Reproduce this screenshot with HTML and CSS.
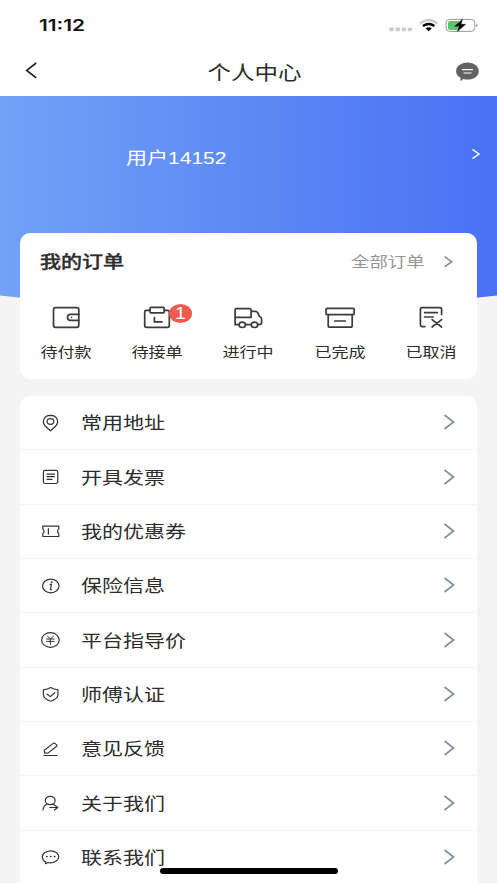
FILE: index.html
```html
<!DOCTYPE html>
<html lang="zh-CN">
<head>
<meta charset="utf-8">
<title>个人中心</title>
<link rel="stylesheet" href="styles.css">
</head>
<body>
<div class="screen">
  <div class="status">
    <span class="time">11:12</span>
    <svg class="indicators" width="90" height="18" viewBox="388 16 90 18">
      <g fill="#cbcbcd"><rect x="389.3" y="27.5" width="4.5" height="3.7" rx="1.2"/><rect x="395.4" y="27.5" width="4.5" height="3.7" rx="1.2"/><rect x="401.6" y="27.5" width="4.5" height="3.7" rx="1.2"/><rect x="407.7" y="27.5" width="4.5" height="3.7" rx="1.2"/></g>
      <path d="M419.8 23.4Q428.7 16.8 437.6 23.4" fill="none" stroke="#c9c9cb" stroke-width="2.4"/>
      <path d="M423 26Q428.7 22 434.4 26" fill="none" stroke="#000" stroke-width="2.5"/>
      <path d="M425.5 28.3Q428.7 26.4 431.9 28.3L428.7 31.2Z" fill="#000"/>
      <rect x="446" y="19.4" width="28.8" height="12" rx="3.6" fill="#fff" stroke="#9b9b9b" stroke-width="1"/>
      <path d="M450 21H459L457.5 30H450Q448 30 448 28V23Q448 21 450 21Z" fill="#5fc466"/>
      <path d="M476.3 23.5Q478.6 25.3 476.3 27.3Z" fill="#8b8b8b"/>
      <path d="M462.5 19.2L454.6 26.3H459L457.4 31.6L465.6 24.3H461Z" fill="#000" stroke="#000" stroke-width=".4"/>
    </svg>
  </div>
  <header class="nav">
    <svg width="14" height="18" viewBox="24 61 14 18"><path d="M36.2 63L26.7 70.4L36.2 77.8" fill="none" stroke="#222" stroke-width="1.7"/></svg>
    <h1 class="title"><span class="wide">个人中心</span></h1>
    <svg width="24" height="20" viewBox="455 62 24 20"><path d="M467.5 62.6C474 62.6 478.8 66.4 478.8 71.2C478.8 76.2 474 79.6 467.5 79.6C466 79.6 464.6 79.5 463.3 79.1L460.4 81.2V77.6C457.6 76.1 456.1 73.8 456.1 71.2C456.1 66.4 461 62.6 467.5 62.6Z" fill="#626262"/><path d="M462 69.6H473M463.5 73H471.5" stroke="#fff" stroke-width="1.1"/></svg>
  </header>
  <section class="hero">
    <span class="user wide">用户14152</span>
    <svg width="10" height="12" viewBox="471 148 10 12"><path d="M472.5 149.4L479 154L472.5 158.6" fill="none" stroke="#fff" stroke-width="1.4"/></svg>
  </section>
  <main class="content">
    <section class="orders">
      <div class="orders-head">
        <h2><span class="wide">我的订单</span></h2>
        <span class="all"><span class="wide">全部订单</span></span>
        <svg width="10" height="14" viewBox="443 255 10 14"><path d="M444.5 256.6L451.7 261.7L444.5 266.8" fill="none" stroke="#888" stroke-width="1.5"/></svg>
      </div>
      <div class="tabs">
        <div class="tab">
          <svg width="36" height="28" viewBox="48 304 36 28"><rect x="53.5" y="307.7" width="25.3" height="19.6" rx="2"/><path d="M78.8 314.4H70.5Q67.5 314.4 67.5 317.4Q67.5 320.3 70.5 320.3H78.8"/><circle cx="71.6" cy="317.4" r=".8" class="dot"/></svg>
          <span class="wide">待付款</span>
        </div>
        <div class="tab">
          <svg width="36" height="28" viewBox="139 304 36 28"><path d="M149.8 310.3H146.4Q144.7 310.3 144.7 312V325.4Q144.7 327.3 146.6 327.3H167.5Q169.3 327.3 169.3 325.4V312Q169.3 310.3 167.6 310.3H164.4M154.4 317.5V321.9H162"/><rect x="150" y="307.4" width="14.2" height="5.4" rx="1"/></svg>
          <span class="wide">待接单</span>
          <span class="badge"><span class="wide">1</span></span>
        </div>
        <div class="tab">
          <svg width="36" height="28" viewBox="230.7 304 36 28"><path d="M239.6 324.6H235.8V309.8Q235.8 308.7 237 308.7H250.6Q251.8 308.7 251.8 309.8V317.3H235.8M251.8 311.4H256Q257.6 311.4 258.6 313L260 316.2Q262.3 317 262.3 319V323Q262.3 324.6 259.3 324.6M246.3 324.6H251.5"/><ellipse cx="243" cy="324.8" rx="3.2" ry="2.7"/><ellipse cx="255.2" cy="324.8" rx="3.2" ry="2.7"/></svg>
          <span class="wide">进行中</span>
        </div>
        <div class="tab">
          <svg width="36" height="28" viewBox="322 304 36 28"><rect x="326" y="308.4" width="28.2" height="6.2" rx="1.2"/><path d="M328.2 314.6V325.4Q328.2 327.2 330 327.2H350.4Q352.2 327.2 352.2 325.4V314.6M334.8 321H345.3"/></svg>
          <span class="wide">已完成</span>
        </div>
        <div class="tab">
          <svg width="36" height="28" viewBox="413.4 304 36 28"><path d="M425.3 326.6H422.4Q420.8 326.6 420.8 325V309Q420.8 307.7 422.4 307.7H440.4Q442 307.7 442 309V314.5M425 312.6H437.8M425 317H433.5M432.5 319.6L442 327M442 319.6L432.5 327"/></svg>
          <span class="wide">已取消</span>
        </div>
      </div>
    </section>
    <ul class="menu">
      <li class="row"><svg class="icon" viewBox="40 412 22 22"><path d="M50.5 430.8L45.7 426.5C41.9 423 42.6 415.5 50.5 415.3C58.4 415.5 59.1 423 55.3 426.5Z"/><ellipse cx="50.5" cy="421.5" rx="3.3" ry="2.8"/></svg><span class="label wide">常用地址</span><svg class="arrow" viewBox="0 0 12 18"><path d="M1.5 2L10.5 9L1.5 16"/></svg></li>
      <li class="row"><svg class="icon" viewBox="40 466.5 22 22"><rect x="43.4" y="470.8" width="14.4" height="13.2" rx="1.8"/><path d="M47 474.7H54.4M47 477.2H54.4M47 479.8H52"/></svg><span class="label wide">开具发票</span><svg class="arrow" viewBox="0 0 12 18"><path d="M1.5 2L10.5 9L1.5 16"/></svg></li>
      <li class="row"><svg class="icon" viewBox="40 520.5 22 22"><path d="M42.8 526.6H58.8V529.4Q56.3 531.8 58.8 534.2V537H42.8V534.2Q45.3 531.8 42.8 529.4ZM48.4 529V534.6"/></svg><span class="label wide">我的优惠券</span><svg class="arrow" viewBox="0 0 12 18"><path d="M1.5 2L10.5 9L1.5 16"/></svg></li>
      <li class="row"><svg class="icon" viewBox="40 575 22 22"><ellipse cx="50.8" cy="586" rx="8.3" ry="6.8"/><path d="M50.2 584.4H51.4L50.5 589.6H51.5" stroke-width="1.2"/><circle cx="51.7" cy="582.3" r=".4"/></svg><span class="label wide">保险信息</span><svg class="arrow" viewBox="0 0 12 18"><path d="M1.5 2L10.5 9L1.5 16"/></svg></li>
      <li class="row"><svg class="icon" viewBox="40 629 22 22"><ellipse cx="50.4" cy="640" rx="8.8" ry="7.3"/><path d="M47.5 636.3L50.4 638.8L53.3 636.3M46.6 639H54.2M46.6 641.4H54.2M50.4 639V644.3" stroke-width="1"/></svg><span class="label wide">平台指导价</span><svg class="arrow" viewBox="0 0 12 18"><path d="M1.5 2L10.5 9L1.5 16"/></svg></li>
      <li class="row"><svg class="icon" viewBox="40 683.2 22 22"><path d="M50.7 687.8Q53.8 689.8 58 690V695Q57.6 699.3 50.7 701.4Q43.8 699.3 43.4 695V690Q47.6 689.8 50.7 687.8ZM47 694.2L50.2 696.8L54.8 692.9"/></svg><span class="label wide">师傅认证</span><svg class="arrow" viewBox="0 0 12 18"><path d="M1.5 2L10.5 9L1.5 16"/></svg></li>
      <li class="row"><svg class="icon" viewBox="40 737.7 22 22"><path d="M44 755.2H57.3M44.6 752.8L44.3 750L53.2 743.1Q54 742.5 54.9 743.1L56.7 744.6Q57.4 745.2 56.7 745.9L48.3 752.6Z"/></svg><span class="label wide">意见反馈</span><svg class="arrow" viewBox="0 0 12 18"><path d="M1.5 2L10.5 9L1.5 16"/></svg></li>
      <li class="row"><svg class="icon" viewBox="40 792 22 22"><ellipse cx="50.2" cy="800.5" rx="4.9" ry="4.2"/><path d="M42.9 810Q43.4 805.6 47.2 804M49.8 807.5H57.8M54.4 804.9L57.8 807.5L54.4 810.1M53 804L54.5 804.9"/></svg><span class="label wide">关于我们</span><svg class="arrow" viewBox="0 0 12 18"><path d="M1.5 2L10.5 9L1.5 16"/></svg></li>
      <li class="row"><svg class="icon" viewBox="40 846.2 22 22"><path d="M45.6 862.2C41.3 859.5 41.4 854.6 45.3 852.5C48.6 850.7 53.2 850.8 56.2 852.6C59.6 854.8 59.6 859 56.2 861.3C53.6 863 50.5 863.2 48.2 862.7L45.5 863.8Z"/><path d="M46.6 856.8H47.1M50.5 856.8H51M54.4 856.8H54.9" stroke-width="1.5"/></svg><span class="label wide">联系我们</span><svg class="arrow" viewBox="0 0 12 18"><path d="M1.5 2L10.5 9L1.5 16"/></svg></li>
    </ul>
  </main>
  <div class="home-bar"></div>
</div>
</body>
</html>
```
FILE: styles.css
```css
* { box-sizing: border-box; margin: 0; padding: 0; }
body {
  width: 497px; height: 883px; overflow: hidden;
  background: #f4f4f4; color: #2c2c2c;
  font-family: "Liberation Sans", "Noto Sans CJK SC", sans-serif;
}
svg { display: block; flex: none; }
.screen { position: relative; height: 883px; overflow: hidden; }
.wide { display: inline-block; white-space: nowrap; transform: scaleX(1.218); transform-origin: left center; }

.status { height: 50px; background: #fff; display: flex; justify-content: space-between; padding: 16px 19px 0 39px; }
.time { font: 600 16px/19px Inter, sans-serif; color: #111; transform: scaleX(1.3); transform-origin: left center; }
.nav { height: 46px; background: #fff; display: flex; justify-content: space-between; align-items: center; padding: 0 18px 4px 24px; }
.nav > svg { margin-top: -2px; }
.nav > svg:last-child { margin-top: 2px; }
.title { font-size: 19.3px; line-height: 26px; font-weight: 400; padding: 5px 0 0 17px; }
.title .wide { transform-origin: center; }

.hero {
  height: 215px; display: flex; justify-content: space-between; align-items: flex-start;
  padding: 49px 16px 0 126px; color: #fff;
  background: linear-gradient(90deg, #71a2f7 0%, #5d89f4 50%, #4a71f5 100%);
  clip-path: path("M0 0H497V199.500Q248.500 230 0 199.500Z");
}
.hero svg { margin-top: 3px; }
.user { font-size: 17.25px; line-height: 26px; }

.content { margin: -78px 20px 0; position: relative; }
.orders { height: 146px; background: #fff; border-radius: 10px; }
.orders-head { height: 57px; display: flex; align-items: center; padding: 0 24px 0 20px; }
.orders-head h2 { flex: 1; font-size: 17.25px; line-height: 26px; font-weight: 400; -webkit-text-stroke: .6px #2c2c2c; }
.all { width: 75px; margin-right: 17px; font-size: 15.1px; line-height: 24px; color: #969696; }
.tabs { display: grid; grid-template-columns: repeat(5, 91.4px); }
.tab { position: relative; display: flex; flex-direction: column; align-items: center; padding-top: 14px; font-size: 14px; line-height: 20px; }
.tab > svg { margin-bottom: 10px; fill: none; stroke: #3b3b3b; stroke-width: 1.7; stroke-linecap: round; }
.tab > .wide { transform-origin: center; }
.tab .dot { fill: #3b3b3b; stroke: none; }
.tab .badge {
  position: absolute; left: 58px; top: 14px; width: 23px; height: 19px;
  border-radius: 50%; background: #ec5b4e; color: #fff;
  font-size: 16px; line-height: 20px; text-align: center;
}
.badge .wide { transform-origin: center; }

.menu { list-style: none; margin-top: 17px; padding-bottom: 20px; background: #fff; border-radius: 10px; }
.row { height: 54.350px; display: flex; align-items: center; padding: 0 22px 0 20px; border-bottom: 1px solid #f5f5f5; }
.icon { width: 22px; height: 22px; margin-right: 19px; fill: none; stroke: #333; stroke-width: 1.2; stroke-linecap: round; stroke-linejoin: round; }
.label { margin: 1.500px auto 0 0; font-size: 17.25px; line-height: 26px; }
.arrow { width: 12px; height: 18px; margin-top: -1px; fill: none; stroke: #8492a0; stroke-width: 1.8; }
.home-bar { position: absolute; left: 160px; top: 868px; width: 178px; height: 6px; border-radius: 3px; background: #000; }
```
